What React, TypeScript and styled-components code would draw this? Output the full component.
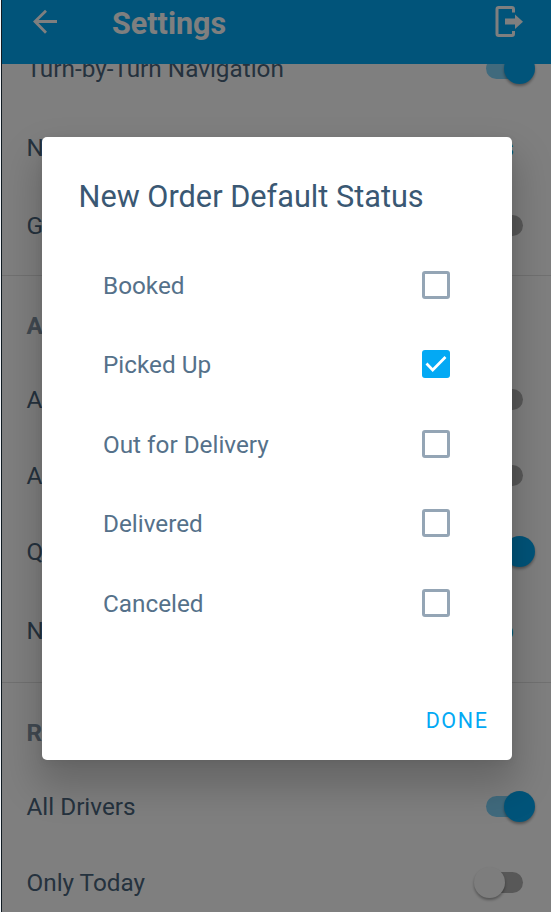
import React from 'react';
import styled, { createGlobalStyle } from 'styled-components';

const Global = createGlobalStyle`
  * { box-sizing: border-box; }
  html, body { margin: 0; padding: 0; }
  body { width: 551px; height: 912px; overflow: hidden; background: #fff; font-family: Roboto, sans-serif; }
`;

const Screen = styled.div`
  position: relative;
  width: 551px;
  height: 912px;
  padding-left: 1px;
  overflow: hidden;
  background: #f4f7fa;
`;

const Phone = styled.div`
  height: 912px;
  border-left: 1px solid #111b22;
  background: #fff;
  overflow: hidden;
`;

const Header = styled.header`
  display: flex;
  align-items: center;
  height: 64px;
  padding: 0 27px 18px 30px;
  background: #03a9f4;
  color: #fff;
`;

const HeaderTitle = styled.h1`
  flex: 1;
  margin: 2px 0 0 52px;
  font-size: 30.5px;
  line-height: 46px;
  font-weight: 700;
`;

const ExitIcon = styled.svg`
  margin-top: -2px;
`;

const List = styled.main`
  height: 848px;
  overflow: hidden;
`;

const Section = styled.section<{ $pull?: number }>`
  margin-top: ${p => p.$pull || 0}px;
  padding-bottom: 10px;
  border-bottom: 1px solid #e3e3e3;
`;

const SectionTitle = styled.h2`
  display: flex;
  align-items: center;
  height: 86px;
  margin: 0;
  padding: 12px 0 0 24.5px;
  font-size: 24.3px;
  font-weight: 700;
  color: #8495a5;
`;

const Row = styled.div<{ $height: number }>`
  display: flex;
  align-items: center;
  justify-content: space-between;
  height: ${p => p.$height}px;
  padding: 0 16.5px 1px 24.5px;
  font-size: 24.3px;
  color: #4a657c;
`;

const Value = styled.span`
  padding-right: 20.5px;
  color: #03a9f4;
`;

const Track = styled.span<{ $on?: boolean }>`
  display: flex;
  align-items: center;
  justify-content: ${p => (p.$on ? 'flex-end' : 'flex-start')};
  width: 37px;
  height: 21px;
  margin-right: 12px;
  border-radius: 11px;
  background: ${p => (p.$on ? '#81d4fa' : '#b0b0b0')};
`;

const Thumb = styled.span<{ $on?: boolean }>`
  flex: none;
  width: 31px;
  height: 31px;
  margin: ${p => (p.$on ? '0 -12px 0 0' : '0 0 0 -12px')};
  border-radius: 50%;
  background: ${p => (p.$on ? '#03a9f4' : '#fafafa')};
  box-shadow: 0 2px 3px rgba(0, 0, 0, 0.35);
`;

const Scrim = styled.div`
  position: absolute;
  inset: 0 0 0 2px;
  display: flex;
  align-items: flex-start;
  padding: 137px 39px 0 40px;
  background: rgba(0, 0, 0, 0.5);
`;

const Dialog = styled.div`
  display: flex;
  flex-direction: column;
  width: 470px;
  height: 623px;
  border-radius: 5px;
  background: #fff;
  box-shadow: 0 22px 38px 5px rgba(0, 0, 0, 0.2), 0 2px 8px rgba(0, 0, 0, 0.06);
`;

const DialogTitle = styled.h2`
  margin: 0 0 0 36.5px;
  padding-top: 37px;
  height: 108px;
  font-size: 30.7px;
  line-height: 46px;
  font-weight: 400;
  color: #3a5873;
`;

const Option = styled.label`
  display: flex;
  align-items: center;
  justify-content: space-between;
  height: 79.5px;
  padding: 0 62px 0 61px;
  font-size: 24.3px;
  color: #55718a;
`;

const OptionName = styled.span`
  padding-top: 1px;
`;

const Box = styled.span<{ $checked?: boolean }>`
  display: flex;
  width: 28px;
  height: 28px;
  border: ${p => (p.$checked ? 'none' : '3px solid #94a5b5')};
  border-radius: 3px;
  background: ${p => (p.$checked ? '#03a9f4' : '#fff')};
`;

const Done = styled.button`
  align-self: flex-end;
  margin: 62px 23.5px 0 0;
  padding: 0;
  border: 0;
  background: none;
  font: 400 21.5px/32px Roboto, sans-serif;
  letter-spacing: 1.6px;
  color: #03a9f4;
`;

const Switch = ({ on }: { on?: boolean }) => (
  <Track $on={on}><Thumb $on={on} /></Track>
);

const options = ['Booked', 'Picked Up', 'Out for Delivery', 'Delivered', 'Canceled'];

export default function App() {
  return (
    <>
      <Global />
      <Screen>
        <Phone>
          <Header>
            <svg width="28" height="28" viewBox="0 0 28 28" fill="none" stroke="#fff" strokeWidth="2.8">
              <path d="M25 12.500H3M14 1.800L3 12.500l11 11.200" />
            </svg>
            <HeaderTitle>Settings</HeaderTitle>
            <ExitIcon width="29" height="32" viewBox="0 0 29 32" fill="none" stroke="#fff" strokeWidth="3">
              <path d="M18.500 12.500V3.200Q18.500 1.500 16.800 1.500H3.700Q2 1.500 2 3.200V27.800Q2 29.500 3.700 29.500H16.800Q18.500 29.500 18.500 27.800V25" strokeDasharray="0 6 200" />
              <path d="M10 12.500h10V8.500L28 15.700l-8 7.300v-4.500H10z" fill="#fff" stroke="none" />
            </ExitIcon>
          </Header>
          <List>
            <Section $pull={-34}>
              <Row $height={78}>Turn-by-Turn Navigation<Switch on /></Row>
              <Row $height={79}>Navigation App<Value>Google Maps</Value></Row>
              <Row $height={78}>Geofencing<Switch /></Row>
            </Section>
            <Section>
              <SectionTitle>Activity</SectionTitle>
              <Row $height={76}>Auto Accept<Switch /></Row>
              <Row $height={76}>Auto Refresh<Switch /></Row>
              <Row $height={76}>Quick Complete<Switch on /></Row>
              <Row $height={82}>New Order Status<Value>Picked Up</Value></Row>
            </Section>
            <Section>
              <SectionTitle>Route</SectionTitle>
              <Row $height={76}>All Drivers<Switch on /></Row>
              <Row $height={76}>Only Today<Switch /></Row>
            </Section>
          </List>
        </Phone>
        <Scrim>
          <Dialog role="dialog">
            <DialogTitle>New Order Default Status</DialogTitle>
            {options.map(name => (
              <Option key={name}>
                <OptionName>{name}</OptionName>
                <Box $checked={name === 'Picked Up'}>
                  {name === 'Picked Up' && (
                    <svg width="28" height="28" viewBox="0 0 28 28" fill="none" stroke="#fff" strokeWidth="2.7">
                      <path d="M4.500 13.500l6.200 6.500L23.500 7" />
                    </svg>
                  )}
                </Box>
              </Option>
            ))}
            <Done>DONE</Done>
          </Dialog>
        </Scrim>
      </Screen>
    </>
  );
}
